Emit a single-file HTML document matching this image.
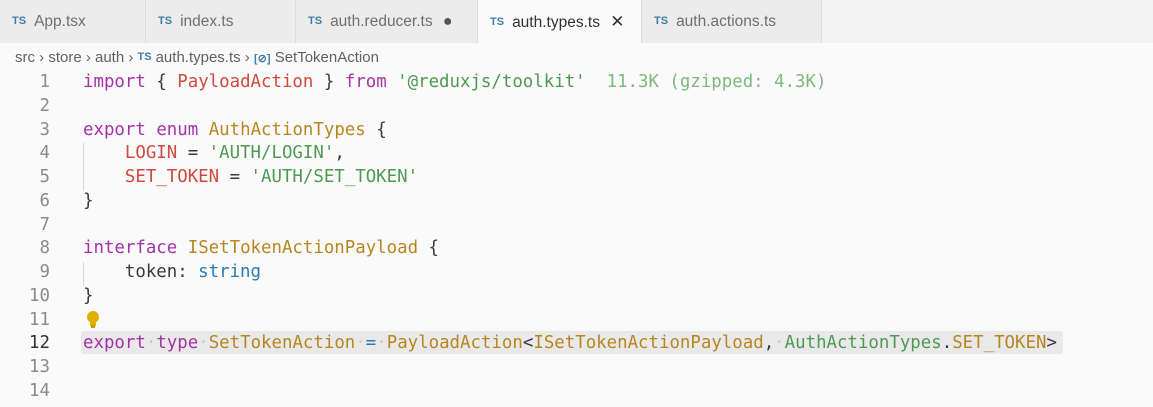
<!DOCTYPE html>
<html><head><meta charset="utf-8"><style>
html,body{margin:0;width:1153px;height:407px;overflow:hidden}
body{background:#fafafa;font-family:"Liberation Sans",sans-serif;position:relative}
.tabs{position:absolute;left:0;top:0;width:1153px;height:43px;background:#f3f3f3}
.tab{position:absolute;top:0;height:43px;background:#ececec;border-right:1px solid #dcdcdc;font-size:15.5px;color:#6f6f6f;line-height:43px;box-sizing:border-box;padding-left:12px}
.tab.act{background:#fafafa;color:#333}
.ts{font-size:11px;font-weight:bold;color:#3d7ea8;margin-right:8px;position:relative;top:-2px}
.bc{position:absolute;left:15px;top:47px;font-size:15px;color:#616161;line-height:22px}
.code{position:absolute;left:0;top:71px;font-family:"DejaVu Sans Mono","Liberation Mono",monospace;font-size:17.4px}
.l{height:23.77px;line-height:23.77px;position:relative;white-space:pre}
.n{position:absolute;left:0;width:50px;text-align:right;color:#8b8b8b}
.c{position:absolute;left:83px;color:#383a42}
.k{color:#a333a6}.t{color:#b8861f}.r{color:#d0493e}.s{color:#4f9a52}.g{color:#7eb97e}.b{color:#2a7bb0}.d{color:#c8c8c8}
.hl{position:absolute;left:81px;top:331px;width:982px;height:23px;background:#e9e9e9;border-radius:3px}
.guide{position:absolute;left:83px;width:1px;background:#d8d8d8}
</style></head><body>
<div class="tabs">
<div class="tab" style="left:0;width:146px"><span class="ts">TS</span>App.tsx</div>
<div class="tab" style="left:146px;width:150px"><span class="ts">TS</span>index.ts</div>
<div class="tab" style="left:296px;width:182px"><span class="ts">TS</span>auth.reducer.ts <span style="color:#555;font-size:16px;margin-left:6px">●</span></div>
<div class="tab act" style="left:478px;width:164px"><span class="ts">TS</span>auth.types.ts <span style="margin-left:6px;font-size:17px;color:#333">✕</span></div>
<div class="tab" style="left:642px;width:180px"><span class="ts">TS</span>auth.actions.ts</div>
</div>
<div class="bc">src › store › auth › <span class="ts" style="margin-right:4px">TS</span>auth.types.ts › <span style="color:#3d7ea8;font-size:11px;font-weight:bold">[⊘]</span> SetTokenAction</div>
<div class="hl"></div>
<div class="guide" style="top:143px;height:48px"></div>
<div class="guide" style="top:262px;height:24px"></div>
<div class="code"><div class="l"><span class="n">1</span><span class="c"><span class="k">import</span> { <span class="r">PayloadAction</span> } <span class="k">from</span> <span class="s">'@reduxjs/toolkit'</span>  <span class="g">11.3K (gzipped: 4.3K)</span></span></div><div class="l"><span class="n">2</span></div><div class="l"><span class="n">3</span><span class="c"><span class="k">export</span> <span class="k">enum</span> <span class="t">AuthActionTypes</span> {</span></div><div class="l"><span class="n">4</span><span class="c">    <span class="r">LOGIN</span> = <span class="s">'AUTH/LOGIN'</span>,</span></div><div class="l"><span class="n">5</span><span class="c">    <span class="r">SET_TOKEN</span> = <span class="s">'AUTH/SET_TOKEN'</span></span></div><div class="l"><span class="n">6</span><span class="c">}</span></div><div class="l"><span class="n">7</span></div><div class="l"><span class="n">8</span><span class="c"><span class="k">interface</span> <span class="t">ISetTokenActionPayload</span> {</span></div><div class="l"><span class="n">9</span><span class="c">    token: <span class="b">string</span></span></div><div class="l"><span class="n">10</span><span class="c">}</span></div><div class="l"><span class="n">11</span><span class="c"><svg width="16" height="20" style="vertical-align:middle;margin-left:2px"><circle cx="8" cy="7" r="6" fill="#e0b000"/><rect x="5" y="11" width="6" height="5" fill="#e0b000"/><rect x="6" y="15" width="4" height="3" fill="#c89a00"/></svg></span></div><div class="l"><span class="n" style="color:#333">12</span><span class="c"><span class="k">export</span><span class="d">·</span><span class="k">type</span><span class="d">·</span><span class="t">SetTokenAction</span><span class="d">·</span><span class="b">=</span><span class="d">·</span><span class="t">PayloadAction</span>&lt;<span class="t">ISetTokenActionPayload</span>,<span class="d">·</span><span class="s">AuthActionTypes</span>.<span class="t">SET_TOKEN</span>&gt;</span></div><div class="l"><span class="n">13</span></div><div class="l"><span class="n">14</span></div></div>
</body></html>
